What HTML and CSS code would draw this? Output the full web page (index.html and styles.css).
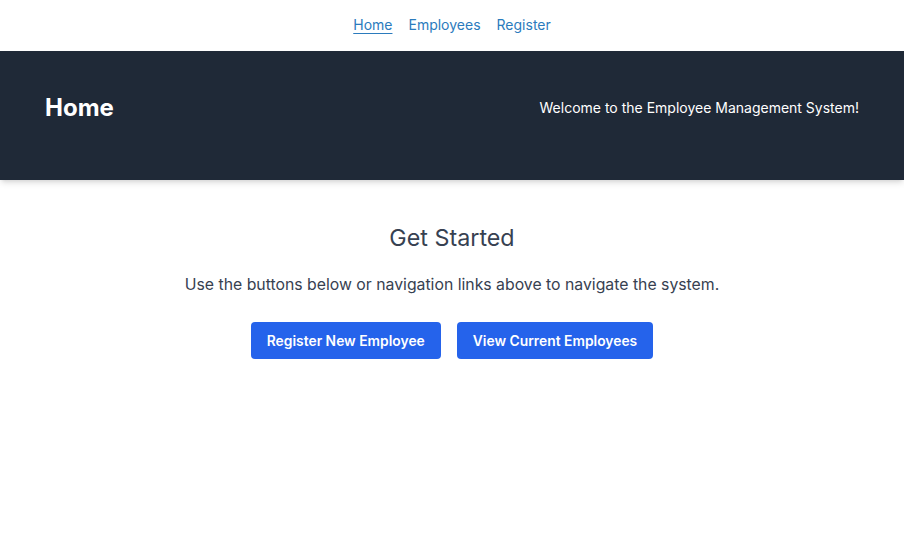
FILE: index.html
```html
<!DOCTYPE html>
<html lang="en">
<head>
<meta charset="utf-8">
<title>Home</title>
<link rel="stylesheet" href="styles.css">
</head>
<body>
<nav class="topnav">
  <a href="#" class="navlink active">Home</a>
  <a href="#" class="navlink">Employees</a>
  <a href="#" class="navlink">Register</a>
</nav>
<header class="hero">
  <h1 class="hero-title">Home</h1>
  <p class="hero-welcome">Welcome to the Employee Management System!</p>
</header>
<main class="content">
  <h2 class="content-title">Get Started</h2>
  <p class="content-text">Use the buttons below or navigation links above to navigate the system.</p>
  <div class="actions">
    <a href="#" class="btn">Register New Employee</a>
    <a href="#" class="btn">View Current Employees</a>
  </div>
</main>
</body>
</html>
```
FILE: styles.css
```css
* { box-sizing: border-box; }
html, body { margin: 0; padding: 0; }
body {
  font-family: Inter, "Noto Sans", sans-serif;
  background: #ffffff;
  color: #374151;
}
.topnav {
  height: 51px;
  display: flex;
  justify-content: center;
  align-items: center;
  gap: 16px;
  padding-bottom: 2px;
}
.navlink {
  font-size: 14px;
  color: #2b7bbd;
  text-decoration: none;
}
.navlink.active { text-decoration: underline; text-underline-offset: 3px; }
.hero {
  background: #1f2937;
  height: 129px;
  display: flex;
  align-items: flex-start;
  justify-content: space-between;
  padding: 41px 45px 0;
  box-shadow: 0 4px 6px -1px rgba(0,0,0,0.12), 0 2px 4px -2px rgba(0,0,0,0.1);
  position: relative;
}
.hero-title {
  margin: 0;
  color: #ffffff;
  font-size: 24px;
  line-height: 32px;
  font-weight: 700;
}
.hero-welcome {
  margin: 0;
  color: #ffffff;
  font-size: 14px;
  line-height: 32px;
}
.content {
  text-align: center;
  padding-top: 42px;
}
.content-title {
  margin: 0;
  font-size: 23.3px;
  font-weight: 400;
  color: #374151;
  line-height: 32px;
}
.content-text {
  margin: 19px 0 0;
  font-size: 15.8px;
  line-height: 24px;
  color: #374151;
}
.actions {
  margin-top: 25px;
  display: flex;
  justify-content: center;
  gap: 16px;
}
.btn {
  display: inline-block;
  background: #2563eb;
  color: #ffffff;
  font-size: 13.85px;
  font-weight: 600;
  text-decoration: none;
  padding: 1px 16px 0;
  height: 37px;
  line-height: 36px;
  border-radius: 4px;
}
```
